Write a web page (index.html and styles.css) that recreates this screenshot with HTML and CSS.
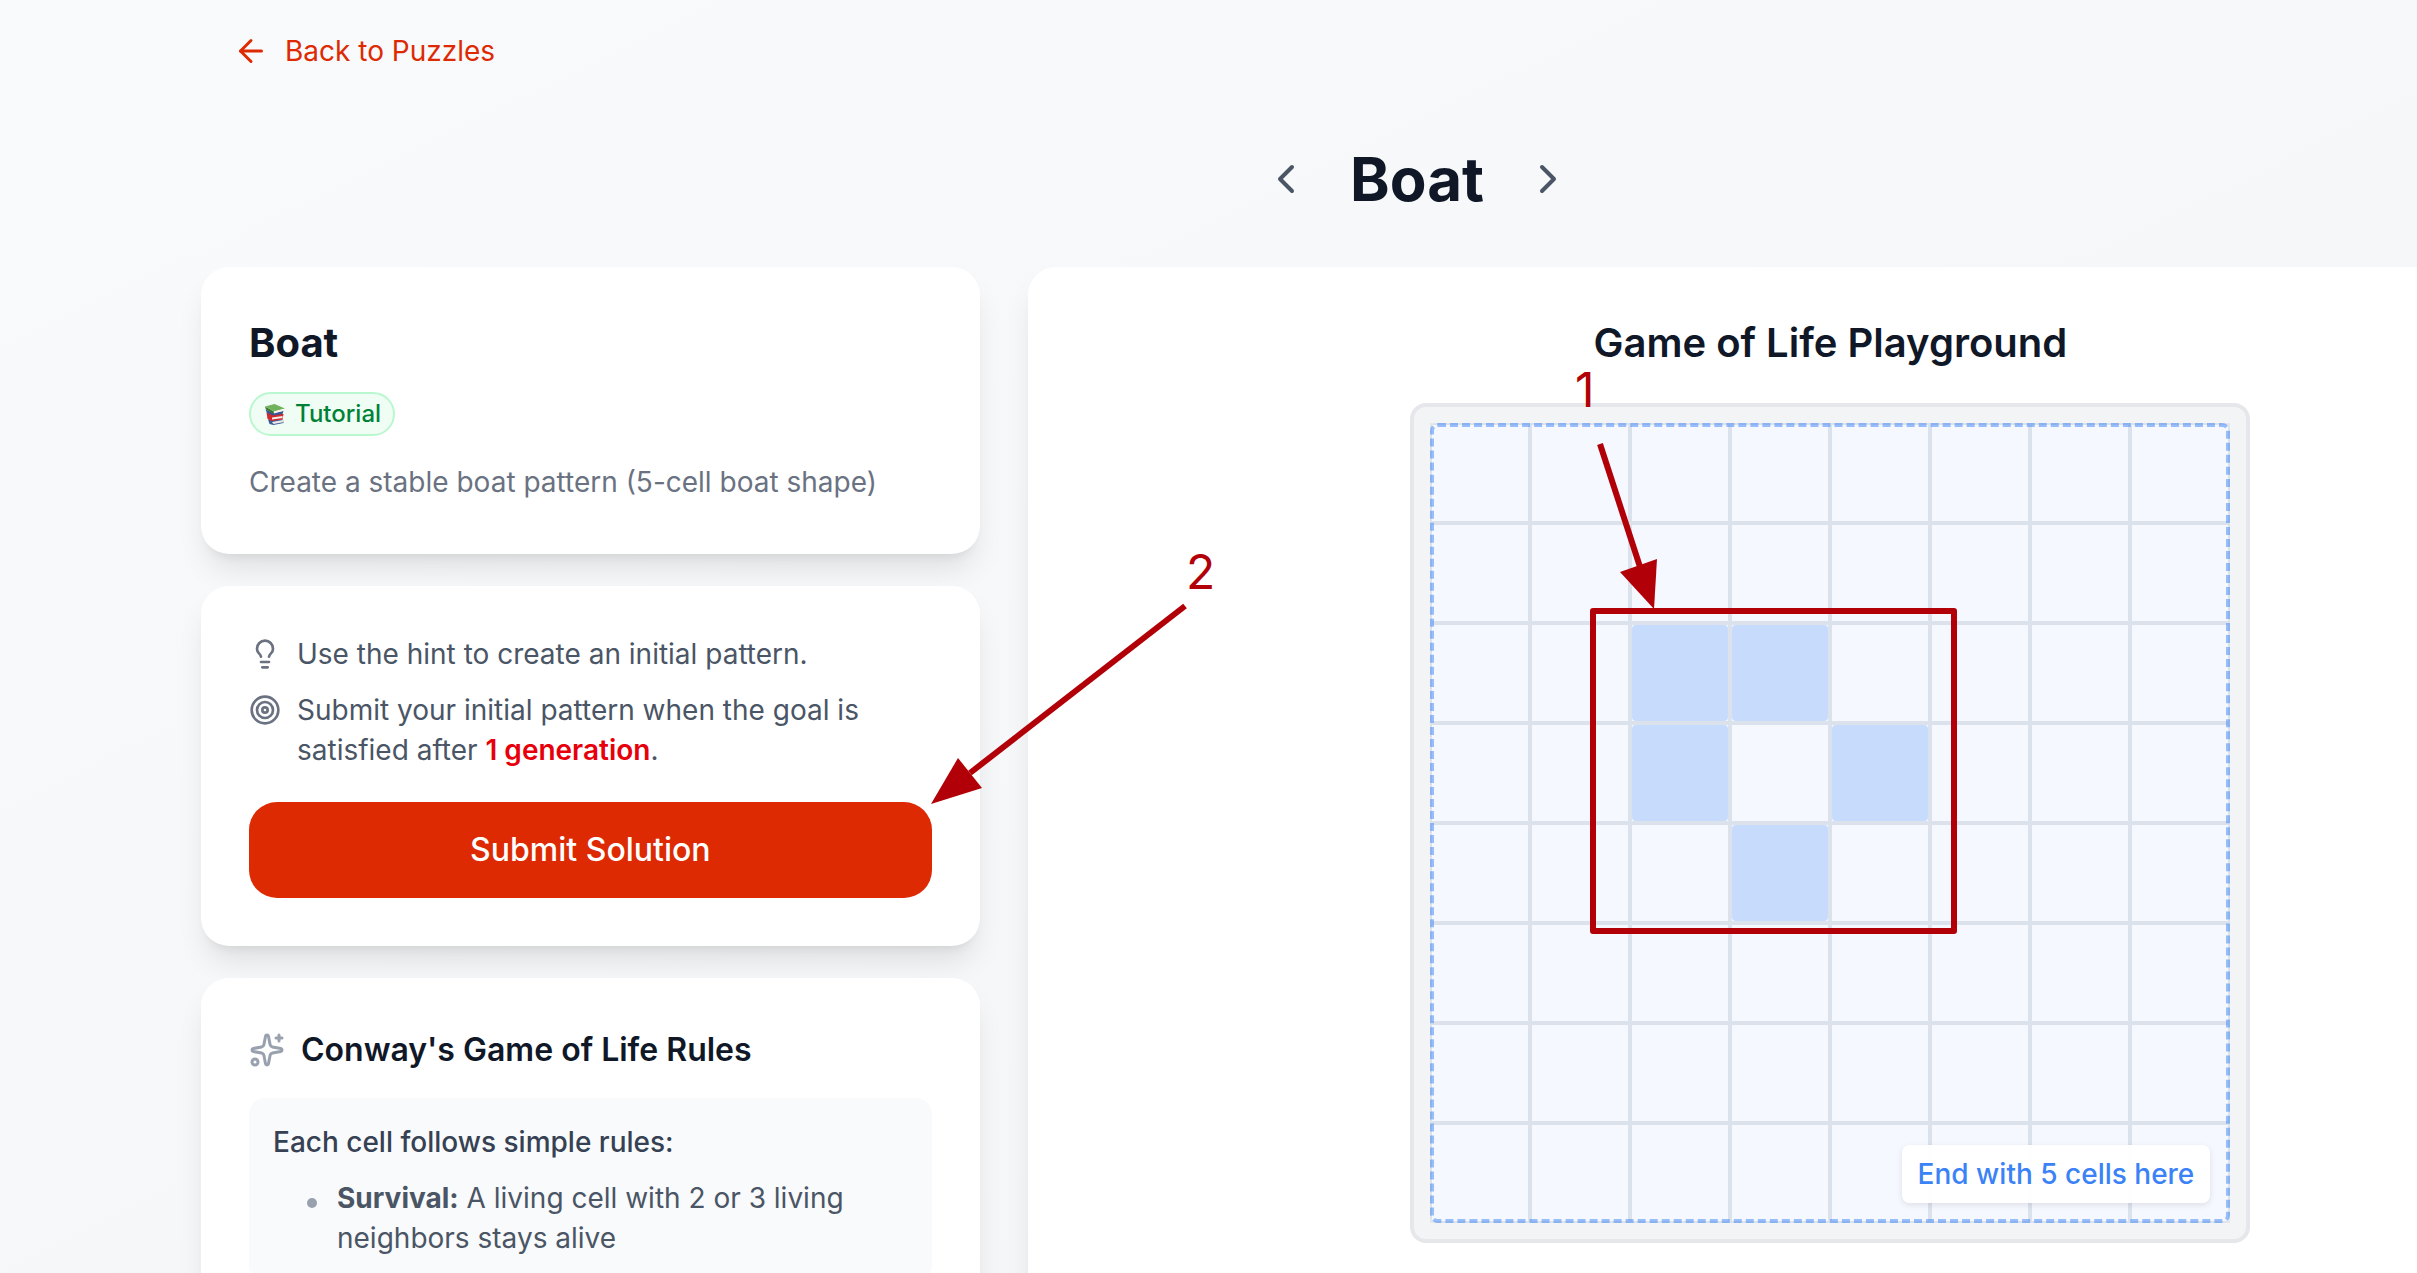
FILE: index.html
```
<!DOCTYPE html>
<html lang="en">
<head>
  <meta charset="UTF-8">
  <meta name="viewport" content="width=device-width, initial-scale=1.0">
  <title>Boat - Game of Life Puzzles</title>
  <link rel="stylesheet" href="styles.css">
</head>
<body>
  <div class="page">
    <nav>
      <a class="back-link" href="#">
        <svg class="icon-md" viewBox="0 0 24 24"><path d="m12 19-7-7 7-7"/><path d="M19 12H5"/></svg>
        Back to Puzzles
      </a>
    </nav>

    <header>
      <button class="nav-button" aria-label="Previous puzzle">
        <svg class="icon-lg" viewBox="0 0 24 24"><path d="m15 18-6-6 6-6"/></svg>
      </button>
      <h1>Boat</h1>
      <button class="nav-button" aria-label="Next puzzle">
        <svg class="icon-lg" viewBox="0 0 24 24"><path d="m9 18 6-6-6-6"/></svg>
      </button>
    </header>

    <main>
      <div class="sidebar">
        <section class="card">
          <h2>Boat</h2>
          <span class="badge">
            <svg class="books" viewBox="0 0 24 24">
              <path d="M5 17.500l1.500 4.500 4 1 10-2-.5-3.500z" fill="#3c5c9c"/>
              <path d="M9 20l11-2v2.200l-9.500 1.800z" fill="#eceae6"/>
              <path d="M3.500 10.500l17 1.500-1 5.500-11 1.500-4-2z" fill="#d02a2c"/>
              <path d="M9 15.500l10.500-1.500v2L9 17.500z" fill="#f3f0ea"/>
              <path d="M2.500 7.500l8 3.500 10-2-1 3-9 1.500L4 11z" fill="#3a5594"/>
              <path d="M2 4.500l9 5-.5 2.500L3 7.500z" fill="#37782f"/>
              <path d="M2 4.500L11.500 2 22 6.500l-11 3z" fill="#72b25c"/>
              <path d="M11 9.500l11-3v1.800L11 11.500z" fill="#f6f5ef"/>
            </svg>
            Tutorial
          </span>
          <p class="description">Create a stable boat pattern (5-cell boat shape)</p>
        </section>

        <section class="card">
          <ul class="steps">
            <li>
              <svg class="icon-sm" viewBox="0 0 24 24"><path d="M15 14c.2-1 .7-1.700 1.500-2.500 1-.9 1.500-2.200 1.500-3.500A6 6 0 0 0 6 8c0 1 .2 2.200 1.500 3.500.7.7 1.300 1.500 1.500 2.500"/><path d="M9 18h6"/><path d="M10 22h4"/></svg>
              <span>Use the hint to create an initial pattern.</span>
            </li>
            <li>
              <svg class="icon-sm" viewBox="0 0 24 24"><circle cx="12" cy="12" r="10"/><circle cx="12" cy="12" r="6"/><circle cx="12" cy="12" r="2"/></svg>
              <span>Submit your initial pattern when the goal is satisfied after <strong>1 generation</strong>.</span>
            </li>
          </ul>
          <button class="submit-button">Submit Solution</button>
        </section>

        <section class="card">
          <h3>
            <svg class="icon-md" viewBox="0 0 24 24"><path d="M11.017 2.814a1 1 0 0 1 1.966 0l1.051 5.558a2 2 0 0 0 1.594 1.594l5.558 1.051a1 1 0 0 1 0 1.966l-5.558 1.051a2 2 0 0 0-1.594 1.594l-1.051 5.558a1 1 0 0 1-1.966 0l-1.051-5.558a2 2 0 0 0-1.594-1.594l-5.558-1.051a1 1 0 0 1 0-1.966l5.558-1.051a2 2 0 0 0 1.594-1.594z"/><path d="M20 2v4"/><path d="M22 4h-4"/><circle cx="4" cy="20" r="2"/></svg>
            Conway's Game of Life Rules
          </h3>
          <div class="rules">
            <p>Each cell follows simple rules:</p>
            <ul>
              <li><span><strong>Survival:</strong> A living cell with 2 or 3 living neighbors stays alive</span></li>
            </ul>
          </div>
        </section>
      </div>

      <section class="card playground">
        <h2>Game of Life Playground</h2>
        <div class="board">
          <div class="grid" id="grid"></div>
          <div class="target"><span class="target-label">End with 5 cells here</span></div>
        </div>
      </section>
    </main>

    <!-- walkthrough markers -->
    <svg class="markers" viewBox="0 0 2417 1273">
      <rect x="1593" y="611" width="361" height="320"/>
      <path d="M1600 444L1642 573"/>
      <polygon points="1654,609 1620,572 1657,559"/>
      <path d="M1185 606L970 773"/>
      <polygon points="931,804 958,758 982,788"/>
      <text x="1575" y="407">1</text>
      <text x="1186" y="589">2</text>
    </svg>
  </div>

<script>
  const size = 8;
  const hints = ['2,2', '2,3', '3,2', '3,4', '4,3'];
  const grid = document.getElementById('grid');

  for (let row = 0; row < size; row++) {
    for (let col = 0; col < size; col++) {
      const cell = document.createElement('button');
      cell.className = 'cell';
      cell.setAttribute('aria-label', `Row ${row + 1}, column ${col + 1}`);
      if (hints.includes(`${row},${col}`)) {
        cell.innerHTML = '<span class="hint"></span>';
      }
      grid.appendChild(cell);
    }
  }
</script>

</body>
</html>
```
FILE: styles.css
```
* {
  box-sizing: border-box;
  margin: 0;
  padding: 0;
}
html {
  overflow: hidden;
}
body {
  font-family: Inter, "Liberation Sans", sans-serif;
  font-size: 28px;
  line-height: 40px;
  color: #4a5565;
}
button {
  font-family: inherit;
  border: none;
  background: none;
  cursor: pointer;
}
svg {
  fill: none;
  stroke: currentColor;
  stroke-width: 2;
  stroke-linecap: round;
  stroke-linejoin: round;
  flex-shrink: 0;
}
ul {
  list-style: none;
}

/* the page is wider than the window, the right side runs off */
.page {
  position: relative;
  width: calc(100% + 417px);
  min-height: 100vh;
  padding: 15px 201px 48px;
  background: linear-gradient(to bottom right, #f9fafc, #f3f4f6);
}
.icon-sm {
  width: 32px;
  height: 32px;
}
.icon-md {
  width: 36px;
  height: 36px;
}
.icon-lg {
  display: block;
  width: 48px;
  height: 48px;
}

.back-link {
  display: inline-flex;
  align-items: center;
  gap: 16px;
  padding: 16px 32px;
  color: #dd2a02;
  text-decoration: none;
}
header {
  display: flex;
  justify-content: center;
  align-items: center;
  gap: 24px;
  margin: 52px 0 48px;
}
h1 {
  font-size: 60px;
  line-height: 80px;
  color: #101828;
}
.nav-button {
  padding: 16px;
  color: #4a5565;
}

main {
  display: grid;
  grid-template-columns: repeat(3, 1fr);
  gap: 48px;
}
.sidebar {
  display: flex;
  flex-direction: column;
  gap: 32px;
}
.card {
  background: #fff;
  border-radius: 28px;
  padding: 48px;
  box-shadow: 0 20px 30px -6px rgba(0, 0, 0, 0.1), 0 8px 12px -8px rgba(0, 0, 0, 0.1);
}
h2 {
  font-size: 40px;
  line-height: 56px;
  color: #101828;
}
.badge {
  display: flex;
  align-items: center;
  gap: 8px;
  width: fit-content;
  margin: 21px 0 22px;
  padding: 4px 12px;
  border: 2px solid #b9f8cf;
  border-radius: 24px;
  background: #f0fdf4;
  color: #008236;
  font-size: 24px;
  line-height: 32px;
  font-weight: 500;
}
.books {
  width: 24px;
  height: 24px;
  stroke: none;
}
.description {
  line-height: 48px;
  color: #6a7282;
}

.steps {
  display: flex;
  flex-direction: column;
  gap: 16px;
}
.steps li {
  display: flex;
  gap: 16px;
}
.steps svg {
  margin-top: 4px;
  color: #6a7282;
}
.steps strong {
  color: #e7000b;
  font-weight: 600;
}
.submit-button {
  width: 100%;
  margin-top: 32px;
  padding: 24px;
  border-radius: 28px;
  background: #dd2a02;
  color: #fff;
  font-size: 32px;
  line-height: 48px;
  font-weight: 500;
}

h3 {
  display: flex;
  align-items: center;
  gap: 16px;
  margin-bottom: 24px;
  font-size: 32px;
  line-height: 48px;
  font-weight: 600;
  color: #101828;
}
h3 svg {
  color: #99a1af;
}
.rules {
  padding: 24px;
  border-radius: 16px;
  background: #f9fafb;
}
.rules p {
  margin-bottom: 16px;
  font-weight: 500;
  color: #364153;
}
.rules li {
  display: flex;
  gap: 20px;
  padding-left: 34px;
}
.rules li::before {
  content: "";
  flex-shrink: 0;
  width: 10px;
  height: 10px;
  margin-top: 20px;
  border-radius: 50%;
  background: #99a1af;
}

.playground {
  grid-column: span 2;
  display: flex;
  flex-direction: column;
  align-items: center;
  gap: 32px;
}
.playground h2 {
  font-weight: 600;
}
.board {
  position: relative;
  padding: 16px;
  border: 4px solid #e5e7eb;
  border-radius: 16px;
  background: #f3f4f6;
}
.grid {
  display: grid;
  grid-template-columns: repeat(8, 100px);
}
.cell {
  height: 100px;
  border: 2px solid #e5e7eb;
  background: #fff;
}
.hint {
  display: block;
  height: 100%;
  border-radius: 4px;
  background: #cfe0fd;
}
.target {
  position: absolute;
  inset: 16px;
  border: 4px dashed rgba(59, 130, 246, 0.5);
  border-radius: 8px;
  background: rgba(59, 130, 246, 0.05);
  pointer-events: none;
}
.target-label {
  position: absolute;
  right: 16px;
  bottom: 16px;
  padding: 9px 16px;
  border-radius: 8px;
  background: rgba(255, 255, 255, 0.95);
  box-shadow: 0 2px 6px rgba(0, 0, 0, 0.1);
  color: #3b82f6;
  font-weight: 500;
  white-space: nowrap;
}

.markers {
  position: absolute;
  top: 0;
  left: 0;
  width: 2417px;
  height: 1273px;
  stroke: #b10007;
  stroke-width: 6;
  stroke-linecap: butt;
  pointer-events: none;
}
.markers polygon,
.markers text {
  fill: #b10007;
  stroke: none;
}
.markers text {
  font-size: 48px;
}
```
